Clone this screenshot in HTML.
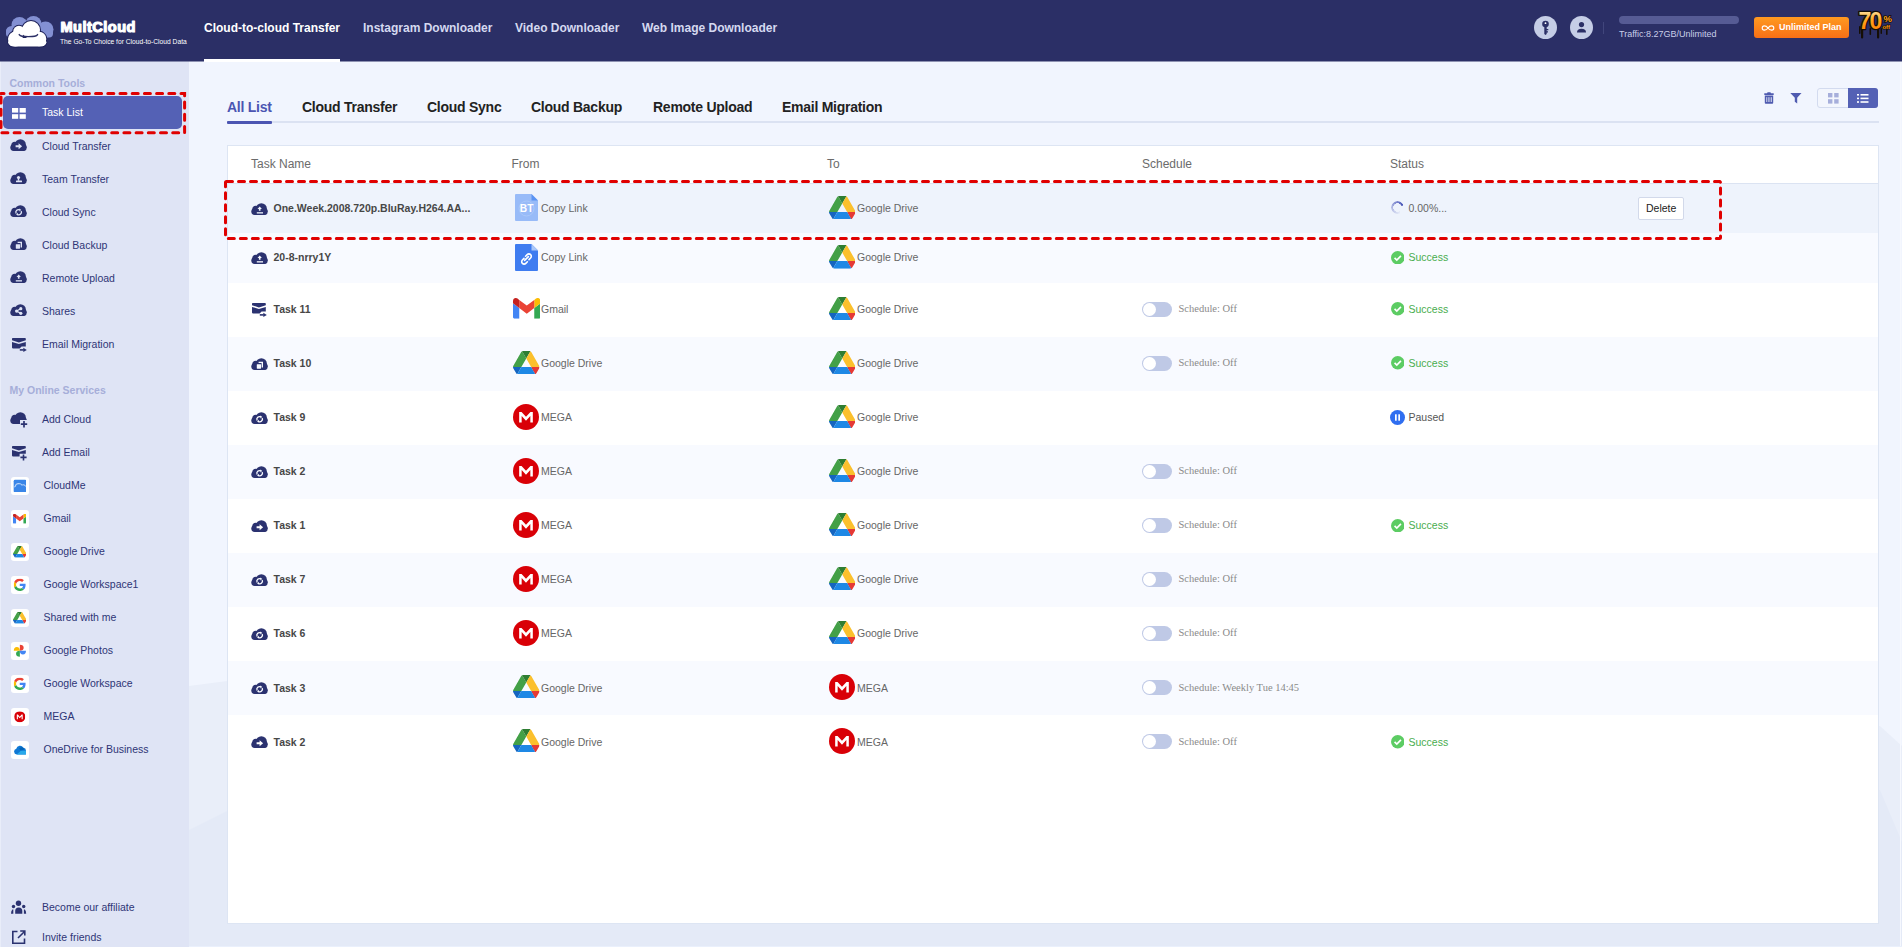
<!DOCTYPE html><html><head><meta charset="utf-8"><title>MultCloud</title><style>
*{margin:0;padding:0;box-sizing:border-box}
html,body{width:1902px;height:947px;overflow:hidden;background:#f1f5fe;font-family:"Liberation Sans",sans-serif}
.abs{position:absolute}
.t{position:absolute;white-space:nowrap;line-height:1}
#hdr{position:absolute;left:0;top:0;width:1902px;height:61px;background:#2b2f66}
#side{position:absolute;left:0;top:61px;width:189px;height:886px;background:#dfe4f5}
.si{position:absolute;left:42px;font-size:10.5px;color:#2e3575;white-space:nowrap;line-height:1}
.lbl{position:absolute;left:9.5px;font-size:10.5px;font-weight:bold;color:#a6aed9;white-space:nowrap;line-height:1}
svg{display:block}
.row{position:absolute;left:228px;width:1650px}
.tn{position:absolute;left:273.5px;font-size:10.5px;font-weight:bold;color:#474747;white-space:nowrap;line-height:1}
.tx{position:absolute;font-size:10.5px;color:#666;white-space:nowrap;line-height:1}
.sch{position:absolute;left:1178.5px;font-family:"Liberation Serif",serif;font-size:10.5px;color:#8a8a8a;white-space:nowrap;line-height:1}
.tog{position:absolute;left:1142px;width:30px;height:15px;border-radius:8px;background:#bfc9e6}
.tog:after{content:"";position:absolute;left:1px;top:1px;width:13px;height:13px;border-radius:50%;background:#fff}
</style></head><body>

<svg width="0" height="0" style="position:absolute">
<defs>
 <symbol id="cloud" viewBox="0 0 17 12">
  <circle cx="4.8" cy="6.2" r="3.5"/><circle cx="10.4" cy="5.7" r="5.5"/><circle cx="3.7" cy="8.6" r="3.4"/><circle cx="13.3" cy="8.6" r="3.5"/>
  <rect x="3.7" y="6" width="9.6" height="6"/>
 </symbol>
 <symbol id="gdrive" viewBox="0 0 87.3 78">
  <path d="m6.6 66.85 3.85 6.65c.8 1.4 1.95 2.5 3.3 3.3l13.75-23.8h-27.5c0 1.55.4 3.1 1.2 4.5z" fill="#1565c0"/>
  <path d="m43.65 25-13.75-23.8c-1.35.8-2.5 1.9-3.3 3.3l-25.4 44a9.06 9.06 0 0 0 -1.2 4.5h27.5z" fill="#43a047"/>
  <path d="m73.55 76.8c1.35-.8 2.5-1.9 3.3-3.3l1.6-2.75 7.650-13.25c.8-1.4 1.2-2.950 1.2-4.5h-27.502l5.852 11.5z" fill="#e53935"/>
  <path d="m43.65 25 13.75-23.8c-1.35-.8-2.9-1.2-4.5-1.2h-18.5c-1.6 0-3.15.45-4.5 1.2z" fill="#2e7d32"/>
  <path d="m59.8 53h-32.3l-13.75 23.8c1.35.8 2.9 1.2 4.5 1.2h50.8c1.6 0 3.15-.45 4.5-1.2z" fill="#1e88e5"/>
  <path d="m73.4 26.5-12.7-22c-.8-1.4-1.95-2.5-3.3-3.3l-13.75 23.8 16.15 28h27.45c0-1.55-.4-3.1-1.2-4.5z" fill="#fbc02d"/>
 </symbol>
 <symbol id="gmail" viewBox="52 42 88 66">
  <path fill="#4285f4" d="M58 108h14V74L52 59v43c0 3.32 2.69 6 6 6"/>
  <path fill="#34a853" d="M120 108h14c3.32 0 6-2.69 6-6V59l-20 15"/>
  <path fill="#fbbc04" d="M120 48v26l20-15v-8c0-7.42-8.47-11.650-14.4-7.2"/>
  <path fill="#ea4335" d="M72 74V48l24 18 24-18v26L96 92"/>
  <path fill="#c5221f" d="M52 51v8l20 15V48l-5.6-4.2c-5.94-4.45-14.4-.22-14.4 7.2"/>
 </symbol>
 <symbol id="gg" viewBox="0 0 48 48">
  <path fill="#EA4335" d="M24 9.5c3.54 0 6.71 1.22 9.21 3.6l6.85-6.85C35.9 2.38 30.47 0 24 0 14.62 0 6.51 5.38 2.56 13.22l7.98 6.19C12.43 13.72 17.74 9.5 24 9.5z"/>
  <path fill="#4285F4" d="M46.98 24.55c0-1.57-.15-3.09-.38-4.55H24v9.02h12.94c-.58 2.960-2.260 5.480-4.780 7.180l7.73 6c4.51-4.18 7.09-10.36 7.09-17.65z"/>
  <path fill="#FBBC05" d="M10.53 28.59c-.48-1.45-.76-2.99-.76-4.59s.27-3.14.76-4.59l-7.98-6.19C.92 16.46 0 20.12 0 24c0 3.88.92 7.54 2.56 10.78l7.97-6.19z"/>
  <path fill="#34A853" d="M24 48c6.48 0 11.93-2.13 15.89-5.81l-7.73-6c-2.15 1.45-4.92 2.3-8.16 2.3-6.26 0-11.57-4.22-13.47-9.91l-7.98 6.19C6.51 42.62 14.62 48 24 48z"/>
 </symbol>
 <symbol id="mega" viewBox="0 0 24 24">
  <circle cx="12" cy="12" r="12" fill="#d90007"/>
  <path d="M5.7 17.1V7.3h2.2l4.1 4.5 4.1-4.5h2.2v9.8h-2.3v-6l-4 4.3-4-4.3v6z" fill="#fff"/>
 </symbol>
</defs>
</svg>
<div id="hdr">
<svg class="abs" style="left:0;top:0" width="60" height="50" viewBox="0 0 60 50">
 <g fill="#8390d3"><circle cx="11.5" cy="31.5" r="5.5"/><circle cx="19.5" cy="25" r="8"/><circle cx="33.5" cy="24" r="8"/><circle cx="45.5" cy="29.5" r="8"/><rect x="6" y="28" width="47" height="9.5" rx="4"/></g>
 <g fill="#1e2259" stroke="#1e2259" stroke-width="2"><circle cx="31" cy="30" r="9"/><circle cx="19" cy="31.5" r="5.8"/><circle cx="15.5" cy="39" r="7.5"/><circle cx="39" cy="39" r="7.3"/><rect x="8.2" y="38" width="38.2" height="8.6" rx="6"/></g>
 <g fill="#fff"><circle cx="31" cy="30" r="9"/><circle cx="19" cy="31.5" r="5.8"/><circle cx="15.5" cy="39" r="7.5"/><circle cx="39" cy="39" r="7.3"/><rect x="8.2" y="38" width="38.2" height="8.6" rx="6"/></g>
 <path d="M19.2 34.6C20.3 36.6 22.5 36.6 28.4 36.6C34.3 36.6 36.5 36.6 37.6 34.6" stroke="#2b2f66" stroke-width="1.4" fill="none" stroke-linecap="round"/>
</svg>
<svg class="abs" style="left:58px;top:16px" width="84" height="20" viewBox="0 0 84 20"><text x="2.5" y="15.8" font-family="Liberation Sans" font-weight="bold" font-size="14.6" letter-spacing="0.45" fill="#fff" stroke="#fff" stroke-width="1.15" stroke-linejoin="round">MultCloud</text></svg>
<div class="t" style="left:60px;top:38.8px;font-size:6.7px;color:#fff">The Go-To Choice for Cloud-to-Cloud Data</div>
<div class="t" style="left:204px;top:22px;font-size:12px;font-weight:bold;color:#fff">Cloud-to-cloud Transfer</div>
<div class="abs" style="left:204px;top:58.5px;width:136px;height:3.5px;background:#fff"></div>
<div class="t" style="left:363px;top:22px;font-size:12px;font-weight:bold;color:#d5d9f0">Instagram Downloader</div>
<div class="t" style="left:515px;top:22px;font-size:12px;font-weight:bold;color:#d5d9f0">Video Downloader</div>
<div class="t" style="left:642px;top:22px;font-size:12px;font-weight:bold;color:#d5d9f0">Web Image Downloader</div>
<svg class="abs" style="left:1534px;top:16px" width="23" height="23" viewBox="0 0 23 23">
 <circle cx="11.5" cy="11.5" r="11.5" fill="#c5cde6"/>
 <circle cx="11.5" cy="8" r="3.3" fill="#2b2f66"/><circle cx="11.5" cy="7.2" r="0.9" fill="#fff"/>
 <path d="M10.3 10 h2.4 v3 h1.6 v1.2 h-1.6 v1.1 h1.3 v1.2 h-1.3 v1.6 l-1.2 1 l-1.2 -1z" fill="#2b2f66"/>
</svg>
<svg class="abs" style="left:1570px;top:16px" width="23" height="23" viewBox="0 0 23 23">
 <circle cx="11.5" cy="11.5" r="11.5" fill="#c5cde6"/>
 <circle cx="11.5" cy="8.6" r="2.6" fill="#2b2f66"/>
 <path d="M7 16.4 q0-3.6 4.5-3.6 q4.5 0 4.5 3.6z" fill="#2b2f66"/>
</svg>
<div class="abs" style="left:1603px;top:22px;width:1px;height:12px;background:#41467c"></div>
<div class="abs" style="left:1619px;top:16px;width:120px;height:8px;border-radius:4px;background:#565b94"></div>
<div class="t" style="left:1619px;top:30px;font-size:9px;color:#c9cee9">Traffic:8.27GB/Unlimited</div>
<div class="abs" style="left:1754px;top:16.5px;width:94.5px;height:21px;border-radius:3px;background:linear-gradient(#ff9a20,#f76f16)"></div>
<svg class="abs" style="left:1761px;top:23.5px" width="14" height="8" viewBox="0 0 14 8"><path d="M7 4 C5 1.2 1.2 1.2 1.2 4 C1.2 6.8 5 6.8 7 4 C9 1.2 12.8 1.2 12.8 4 C12.8 6.8 9 6.8 7 4z" fill="none" stroke="#fff" stroke-width="1.1"/></svg>
<div class="t" style="left:1779px;top:23px;font-size:9px;font-weight:bold;color:#fff">Unlimited Plan</div>
<svg class="abs" style="left:1856px;top:8px" width="40" height="34" viewBox="0 0 40 34">
 <defs><linearGradient id="og" x1="0" y1="0" x2="0" y2="1"><stop offset="0" stop-color="#fff2c8"/><stop offset="0.45" stop-color="#ffa51c"/><stop offset="1" stop-color="#ff7800"/></linearGradient></defs>
 <g fill="#150e05"><rect x="5" y="18" width="2.2" height="12.5" rx="1.1"/><rect x="13.5" y="20" width="1.6" height="7" rx="0.8"/><rect x="21" y="18" width="2.2" height="12.5" rx="1.1"/><rect x="24.5" y="20" width="1.5" height="6" rx="0.7"/><rect x="30" y="19" width="1.6" height="8" rx="0.8"/><rect x="3" y="18" width="1.5" height="8" rx="0.7"/></g>
 <text x="2.6" y="21.2" font-family="Liberation Sans" font-weight="bold" font-size="23" letter-spacing="-1.9" fill="url(#og)" stroke="#150e05" stroke-width="2.6" stroke-linejoin="round" paint-order="stroke">70</text>
 <text x="27.6" y="13.6" font-family="Liberation Sans" font-weight="bold" font-size="9.5" fill="#ffa51c" stroke="#150e05" stroke-width="1.6" paint-order="stroke">%</text>
 <text x="26.4" y="20.8" font-family="Liberation Sans" font-weight="bold" font-size="6" fill="#ff9a10" stroke="#150e05" stroke-width="1.2" paint-order="stroke">off</text>
</svg>
</div>
<div class="abs" style="left:0;top:61px;width:1902px;height:1px;background:rgba(43,47,102,0.5);z-index:5"></div>
<div class="abs" style="left:204px;top:61px;width:136px;height:1px;background:#fff;z-index:6"></div>
<div id="side">
<div class="abs" style="left:0;top:0;width:1px;height:886px;background:#e9edf9"></div>
<div class="lbl" style="top:16.5px">Common Tools</div>
<div class="abs" style="left:3px;top:35px;width:179px;height:33px;border-radius:5px;background:#5461b5"></div>
<svg class="abs" style="left:12px;top:46.5px" width="14" height="11" viewBox="0 0 14 11" fill="#fff"><rect x="0" y="0" width="6.2" height="4.6"/><rect x="7.6" y="0" width="6.2" height="4.6"/><rect x="0" y="6.2" width="6.2" height="4.6"/><rect x="7.6" y="6.2" width="6.2" height="4.6"/></svg>
<div class="si" style="top:46px;color:#fff">Task List</div>
<svg class="abs" style="left:10.2px;top:78.4px" width="17" height="12" viewBox="0 0 17 12"><use href="#cloud" fill="#2b3270"/><path d="M5.6 6.3h3v-2l3.5 3-3.5 3v-2h-3z" fill="#dfe4f5"/></svg>
<div class="si" style="top:80px">Cloud Transfer</div>
<svg class="abs" style="left:10.2px;top:111.4px" width="17" height="12" viewBox="0 0 17 12"><use href="#cloud" fill="#2b3270"/><circle cx="8.5" cy="5.5" r="1.6" fill="#dfe4f5"/><rect x="7.8" y="6.5" width="1.4" height="2.2" fill="#dfe4f5"/><rect x="6" y="8.6" width="6" height="1.7" rx="0.5" fill="#dfe4f5"/></svg>
<div class="si" style="top:113px">Team Transfer</div>
<svg class="abs" style="left:10.2px;top:144.4px" width="17" height="12" viewBox="0 0 17 12"><use href="#cloud" fill="#2b3270"/><path d="M6.1 8.4A2.7 2.7 0 0 1 9.8 4.9" fill="none" stroke="#dfe4f5" stroke-width="1.3"/><path d="M11.2 6A2.7 2.7 0 0 1 7.5 9.5" fill="none" stroke="#dfe4f5" stroke-width="1.3"/><path d="M9 3.6l2.2 1.2-1.6 1.8z M8.3 10.8l-2.2-1.2 1.6-1.8z" fill="#dfe4f5"/></svg>
<div class="si" style="top:146px">Cloud Sync</div>
<svg class="abs" style="left:10.2px;top:177.4px" width="17" height="12" viewBox="0 0 17 12"><use href="#cloud" fill="#2b3270"/><path d="M7.6 3.7h4.4v5.7h-1.4V5.1H7.6z" fill="#dfe4f5"/><rect x="5.8" y="6.2" width="4.2" height="4.5" rx="0.4" fill="#dfe4f5"/></svg>
<div class="si" style="top:179px">Cloud Backup</div>
<svg class="abs" style="left:10.2px;top:210.39999999999998px" width="17" height="12" viewBox="0 0 17 12"><use href="#cloud" fill="#2b3270"/><path d="M8.7 3.4l2.2 2.7h-1.4v1.7H7.9V6.1H6.5z" fill="#dfe4f5"/><rect x="5.8" y="9.2" width="6.2" height="1.3" fill="#dfe4f5"/></svg>
<div class="si" style="top:212px">Remote Upload</div>
<svg class="abs" style="left:10.2px;top:243.39999999999998px" width="17" height="12" viewBox="0 0 17 12"><use href="#cloud" fill="#2b3270"/><circle cx="6.6" cy="7.1" r="1.6" fill="#dfe4f5"/><circle cx="10.8" cy="4.7" r="1.6" fill="#dfe4f5"/><circle cx="10.8" cy="9.3" r="1.6" fill="#dfe4f5"/><path d="M6.6 7.1L10.8 4.7M6.6 7.1l4.2 2.2" stroke="#dfe4f5" stroke-width="1.2"/></svg>
<div class="si" style="top:245px">Shares</div>
<svg class="abs" style="left:12px;top:276.9px" width="16" height="15" viewBox="0 0 16 15"><path d="M0.8 0h12.2a0.8 0.8 0 0 1 0.8 0.8v1.4L6.9 4.4 0 2.2V0.8A0.8 0.8 0 0 1 0.8 0z" fill="#2b3270"/><path d="M0 3.9L6.9 6 13.8 3.9V8.5H9.6L7.6 10.4H0.8A0.8 0.8 0 0 1 0 9.6z" fill="#2b3270"/><rect x="7.8" y="11.1" width="4" height="1.6" fill="#2b3270"/><path d="M11.3 9.8L14.8 11.9 11.3 14z" fill="#2b3270"/></svg>
<div class="si" style="top:278px">Email Migration</div>
<div class="lbl" style="top:324px">My Online Services</div>
<svg class="abs" style="left:10px;top:351px" width="18" height="16" viewBox="0 0 18 16"><use href="#cloud" width="17" height="12" fill="#2b3270"/><rect x="10" y="8" width="8" height="8" fill="#dfe4f5"/><path d="M10.8 12.2h6.4M14 9v6.4" stroke="#2b3270" stroke-width="1.7"/></svg>
<div class="si" style="top:353px">Add Cloud</div>
<svg class="abs" style="left:12px;top:384.9px" width="16" height="15" viewBox="0 0 16 15"><path d="M0.8 0h12.2a0.8 0.8 0 0 1 0.8 0.8v1.4L6.9 4.4 0 2.2V0.8A0.8 0.8 0 0 1 0.8 0z" fill="#2b3270"/><path d="M0 3.9L6.9 6 13.8 3.9V7.8H7.6V10.4H0.8A0.8 0.8 0 0 1 0 9.6z" fill="#2b3270"/><path d="M8.4 11.4h6.2M11.5 8.4v6" stroke="#2b3270" stroke-width="1.6"/></svg>
<div class="si" style="top:386px">Add Email</div>
<div class="abs" style="left:10.5px;top:415.5px;width:18px;height:18px;border-radius:3px;background:#fff"><svg class="abs" style="left:2.25px;top:2.25px" width="13.5" height="13.5" viewBox="0 0 12 12"><rect x="0.6" y="0.6" width="11.4" height="11.4" rx="1.3" fill="#3a86e8"/><path d="M0.6 7.1l1.3-0.3q0.4-2.6 3.2-2.7q2 0 2.8 1.3q1.6-0.9 3 0.6l1.1 1" stroke="#b9d4f7" stroke-width="0.9" fill="none"/></svg></div>
<div class="si" style="left:43.5px;top:419px">CloudMe</div>
<div class="abs" style="left:10.5px;top:448.5px;width:18px;height:18px;border-radius:3px;background:#fff"><svg class="abs" style="left:2.25px;top:2.25px" width="13.5" height="13.5" viewBox="0 0 12 12"><svg x="0" y="1.5" width="12" height="9"><use href="#gmail"/></svg></svg></div>
<div class="si" style="left:43.5px;top:452px">Gmail</div>
<div class="abs" style="left:10.5px;top:481.5px;width:18px;height:18px;border-radius:3px;background:#fff"><svg class="abs" style="left:2.25px;top:2.25px" width="13.5" height="13.5" viewBox="0 0 12 12"><svg x="0" y="0.7" width="12" height="10.7"><use href="#gdrive"/></svg></svg></div>
<div class="si" style="left:43.5px;top:485px">Google Drive</div>
<div class="abs" style="left:10.5px;top:514.5px;width:18px;height:18px;border-radius:3px;background:#fff"><svg class="abs" style="left:2.25px;top:2.25px" width="13.5" height="13.5" viewBox="0 0 12 12"><svg x="0.5" y="0.5" width="11" height="11"><use href="#gg"/></svg></svg></div>
<div class="si" style="left:43.5px;top:518px">Google Workspace1</div>
<div class="abs" style="left:10.5px;top:547.5px;width:18px;height:18px;border-radius:3px;background:#fff"><svg class="abs" style="left:2.25px;top:2.25px" width="13.5" height="13.5" viewBox="0 0 12 12"><svg x="0" y="0.7" width="12" height="10.7"><use href="#gdrive"/></svg></svg></div>
<div class="si" style="left:43.5px;top:551px">Shared with me</div>
<div class="abs" style="left:10.5px;top:580.5px;width:18px;height:18px;border-radius:3px;background:#fff"><svg class="abs" style="left:2.25px;top:2.25px" width="13.5" height="13.5" viewBox="0 0 12 12"><path d="M6.1 6V0.6A3.4 2.7 0 0 1 6.1 6z" fill="#ea4335"/><path d="M6.1 6H0.7A2.7 3.4 0 0 1 6.1 6z" fill="#fbbc04"/><path d="M6.1 6v5.4A3.4 2.7 0 0 1 6.1 6z" fill="#34a853"/><path d="M6.1 6h5.4A2.7 3.4 0 0 1 6.1 6z" fill="#4285f4"/></svg></div>
<div class="si" style="left:43.5px;top:584px">Google Photos</div>
<div class="abs" style="left:10.5px;top:613.5px;width:18px;height:18px;border-radius:3px;background:#fff"><svg class="abs" style="left:2.25px;top:2.25px" width="13.5" height="13.5" viewBox="0 0 12 12"><svg x="0.5" y="0.5" width="11" height="11"><use href="#gg"/></svg></svg></div>
<div class="si" style="left:43.5px;top:617px">Google Workspace</div>
<div class="abs" style="left:10.5px;top:646.5px;width:18px;height:18px;border-radius:3px;background:#fff"><svg class="abs" style="left:2.25px;top:2.25px" width="13.5" height="13.5" viewBox="0 0 12 12"><svg x="1" y="1" width="10" height="10"><use href="#mega"/></svg></svg></div>
<div class="si" style="left:43.5px;top:650px">MEGA</div>
<div class="abs" style="left:10.5px;top:679.5px;width:18px;height:18px;border-radius:3px;background:#fff"><svg class="abs" style="left:2.25px;top:2.25px" width="13.5" height="13.5" viewBox="0 0 12 12"><path d="M3.3 10.2a2.6 2.6 0 0 1-.4-5.1 3.4 3.4 0 0 1 6.3-.9 2.6 2.6 0 0 1 2.3 2.7 1.9 1.9 0 0 1-.5 3.3z" fill="#0f78d4"/><path d="M5.4 4.9a3.4 3.4 0 0 1 3.8-.7 2.6 2.6 0 0 1 .8 1.6L7 6.9z" fill="#0364b8"/><path d="M3.3 10.2h7.8a1.9 1.9 0 0 0 .5-3.3L7 6.9 4.2 9.3z" fill="#28a8ea"/></svg></div>
<div class="si" style="left:43.5px;top:683px">OneDrive for Business</div>
<svg class="abs" style="left:10px;top:838px" width="18" height="16" viewBox="0 0 18 16" fill="#2b3270"><circle cx="8.5" cy="4.2" r="2.7"/><path d="M5.2 14.7V12.1a3.55 3.55 0 0 1 7.1 0V14.7z"/><circle cx="3.5" cy="7.5" r="1.7"/><circle cx="13.7" cy="7.5" r="1.7"/><path d="M1 14.7q0-3 1.4-4.3h0.9v4.3z"/><path d="M16.2 14.7q0-3-1.4-4.3h-0.9v4.3z"/></svg>
<div class="si" style="top:841px">Become our affiliate</div>
<svg class="abs" style="left:12px;top:869px" width="14" height="14" viewBox="0 0 14 14" fill="none" stroke="#2b3270" stroke-width="1.6"><path d="M5.5 1.5H0.8v11.7h11.7V8.5"/><path d="M6 8L12.8 1.2M8.2 1h4.6v4.6"/></svg>
<div class="si" style="top:871px">Invite friends</div>
<svg class="abs" style="left:0;top:30px" width="188" height="45" viewBox="0 0 188 45"><rect x="1" y="2.4" width="183.6" height="39.3" fill="none" stroke="#e00000" stroke-width="3" stroke-dasharray="6 6.2" stroke-dashoffset="3" stroke-linecap="round"/></svg>
</div>
<svg class="abs" style="left:189px;top:61px" width="1713" height="886" viewBox="0 0 1713 886">
 <polygon points="0,625 38,620 1691,665 1713,685 1713,886 0,886" fill="#e9eef9"/>
 <polygon points="0,769 38,750 1691,729 1713,781 1713,886 0,886" fill="#e4eaf7"/>
</svg>
<div class="abs" style="left:1900px;top:61px;width:1px;height:886px;background:#f6f8fe"></div>
<div class="abs" style="left:189px;top:946px;width:1713px;height:1px;background:#eaf0fc"></div>
<div class="t" style="left:227px;top:100.4px;font-size:14px;letter-spacing:-0.26px;font-weight:bold;color:#4b55b2">All List</div>
<div class="t" style="left:302px;top:100.4px;font-size:14px;letter-spacing:-0.26px;font-weight:bold;color:#222">Cloud Transfer</div>
<div class="t" style="left:427px;top:100.4px;font-size:14px;letter-spacing:-0.26px;font-weight:bold;color:#222">Cloud Sync</div>
<div class="t" style="left:531px;top:100.4px;font-size:14px;letter-spacing:-0.26px;font-weight:bold;color:#222">Cloud Backup</div>
<div class="t" style="left:653px;top:100.4px;font-size:14px;letter-spacing:-0.26px;font-weight:bold;color:#222">Remote Upload</div>
<div class="t" style="left:782px;top:100.4px;font-size:14px;letter-spacing:-0.26px;font-weight:bold;color:#222">Email Migration</div>
<div class="abs" style="left:227px;top:121px;width:1652px;height:2px;background:#dbe2f2"></div>
<div class="abs" style="left:227px;top:120.5px;width:45px;height:3px;border-radius:1px;background:#4b55b2"></div>
<svg class="abs" style="left:1764px;top:92px" width="10" height="12" viewBox="0 0 10 12" fill="#4f5bb0"><path d="M3.6 0.2h2.8l0.6 1h2.7v1.7H0.3V1.2H3z"/><path d="M0.8 3.6h8.4v7.2q0 0.9-0.9 0.9H1.7q-0.9 0-0.9-0.9z"/><path d="M2.6 5.2v4.8M4.3 5.2v4.8M5.9 5.2v4.8M7.5 5.2v4.8" stroke="#c6cde8" stroke-width="0.9"/></svg>
<svg class="abs" style="left:1790px;top:92px" width="12" height="12" viewBox="0 0 12 12" fill="#4f5bb0"><path d="M0.3 0.9h11.2l-4.3 4.8v5.9l-2.4-1.8V5.7z"/></svg>
<div class="abs" style="left:1817px;top:88px;width:61px;height:20px;border-radius:3px;border:1px solid #d3dbef;background:#f3f6fd"></div>
<div class="abs" style="left:1848px;top:88px;width:30px;height:20px;border-radius:0 3px 3px 0;background:#5461b5"></div>
<svg class="abs" style="left:1827.5px;top:93px" width="11" height="11" viewBox="0 0 11 11" fill="#a6aedb"><rect x="0" y="0" width="4.4" height="4.4"/><rect x="6.2" y="0" width="4.4" height="4.4"/><rect x="0" y="6.2" width="4.4" height="4.4"/><rect x="6.2" y="6.2" width="4.4" height="4.4"/></svg>
<svg class="abs" style="left:1857px;top:94px" width="12" height="9" viewBox="0 0 12 9" fill="#fff"><rect x="0" y="0" width="2" height="1.6"/><rect x="3.5" y="0" width="8" height="1.6"/><rect x="0" y="3.6" width="2" height="1.6"/><rect x="3.5" y="3.6" width="8" height="1.6"/><rect x="0" y="7.2" width="2" height="1.6"/><rect x="3.5" y="7.2" width="8" height="1.6"/></svg>
<div class="abs" style="left:227px;top:145px;width:1652px;height:779px;background:#fff;border:1px solid #dde5f3"></div>
<div class="t" style="left:251px;top:157.5px;font-size:12px;color:#6b6b6b">Task Name</div>
<div class="t" style="left:511.5px;top:157.5px;font-size:12px;color:#6b6b6b">From</div>
<div class="t" style="left:827px;top:157.5px;font-size:12px;color:#6b6b6b">To</div>
<div class="t" style="left:1142px;top:157.5px;font-size:12px;color:#6b6b6b">Schedule</div>
<div class="t" style="left:1390px;top:157.5px;font-size:12px;color:#6b6b6b">Status</div>
<div class="abs" style="left:228px;top:182.5px;width:1650px;height:1.5px;background:#dbe3f2"></div>
<div class="row" style="top:184px;height:49px;background:#eef3fc"></div>
<svg class="abs" style="left:250.5px;top:202.5px" width="17" height="12" viewBox="0 0 17 12"><use href="#cloud" fill="#2b3270"/><path d="M8.7 3.4l2.2 2.7h-1.4v1.7H7.9V6.1H6.5z" fill="#eef3fc"/><rect x="5.8" y="9.2" width="6.2" height="1.3" fill="#eef3fc"/></svg>
<div class="tn" style="top:202.5px">One.Week.2008.720p.BluRay.H264.AA...</div>
<svg class="abs" style="left:514.5px;top:194.0px" width="23" height="27" viewBox="0 0 23 27"><path d="M1 0h15.5l6.5 6.5v19.5q0 1-1 1H1Q0 27 0 26V1Q0 0 1 0z" fill="#98bbf8"/><circle cx="11.5" cy="14.5" r="7.5" fill="none" stroke="#aac8fa" stroke-width="1"/><path d="M16.5 0l6.5 6.5h-6.5z" fill="#5a93f2"/><text x="11.6" y="18" text-anchor="middle" font-family="Liberation Sans" font-weight="bold" font-size="10.2" fill="#fff">BT</text></svg>
<div class="tx" style="left:541px;top:202.5px">Copy Link</div>
<svg class="abs" style="left:828.7px;top:195.6px" width="26.5" height="23.7" viewBox="0 0 87.3 78" preserveAspectRatio="none"><use href="#gdrive"/></svg>
<div class="tx" style="left:857px;top:202.5px">Google Drive</div>
<div class="abs" style="left:1390.5px;top:200.75px;width:13.5px;height:13.5px;border-radius:50%;background:conic-gradient(from 150deg, rgba(74,87,185,0.04) 0deg, rgba(74,87,185,0.45) 140deg, #4a57b9 270deg, transparent 270deg);-webkit-mask:radial-gradient(circle, transparent 4.1px, #000 4.4px)"></div><div class="abs" style="left:1400.72px;top:203.53px;width:2.5px;height:2.5px;border-radius:50%;background:#4a57b9"></div>
<div class="tx" style="left:1408.5px;top:202.5px">0.00%...</div>
<div class="abs" style="left:1637.5px;top:197px;width:46px;height:23px;border:1px solid #d2d9ea;border-radius:2px;background:#fff"></div>
<div class="t" style="left:1646px;top:202.5px;font-size:10.5px;color:#222">Delete</div>
<div class="row" style="top:233px;height:50px;background:#f8faff"></div>
<svg class="abs" style="left:250.5px;top:252.0px" width="17" height="12" viewBox="0 0 17 12"><use href="#cloud" fill="#2b3270"/><path d="M8.7 3.4l2.2 2.7h-1.4v1.7H7.9V6.1H6.5z" fill="#f8faff"/><rect x="5.8" y="9.2" width="6.2" height="1.3" fill="#f8faff"/></svg>
<div class="tn" style="top:252.0px">20-8-nrry1Y</div>
<svg class="abs" style="left:514.5px;top:243.5px" width="23" height="27" viewBox="0 0 23 27"><path d="M1 0h15.5l6.5 6.5v19.5q0 1-1 1H1Q0 27 0 26V1Q0 0 1 0z" fill="#3f7cf0"/><path d="M16.5 0l6.5 6.5h-6.5z" fill="#a9c6f8"/><g fill="none" stroke="#fff" stroke-width="1.6" stroke-linecap="round"><path d="M10.6 12.2l1.6-1.6a2.4 2.4 0 0 1 3.4 3.4l-1.6 1.6"/><path d="M12.4 17.8l-1.6 1.6a2.4 2.4 0 0 1-3.4-3.4l1.6-1.6"/><path d="M9.6 16.4l3.8-3.8"/></g></svg>
<div class="tx" style="left:541px;top:252.0px">Copy Link</div>
<svg class="abs" style="left:828.7px;top:245.1px" width="26.5" height="23.7" viewBox="0 0 87.3 78" preserveAspectRatio="none"><use href="#gdrive"/></svg>
<div class="tx" style="left:857px;top:252.0px">Google Drive</div>
<svg class="abs" style="left:1390.8px;top:250.5px" width="13.5" height="13.5" viewBox="0 0 14 14"><circle cx="7" cy="7" r="7" fill="#5ccc63"/><path d="M3.7 7.2l2.3 2.3 4.3-4.4" stroke="#fff" stroke-width="1.7" fill="none"/></svg>
<div class="tx" style="left:1408.5px;top:252.0px;color:#48ad4e">Success</div>
<div class="row" style="top:283px;height:54px;background:#ffffff"></div>
<svg class="abs" style="left:252px;top:303.2px" width="16" height="15" viewBox="0 0 16 15"><path d="M0.8 0h12.2a0.8 0.8 0 0 1 0.8 0.8v1.4L6.9 4.4 0 2.2V0.8A0.8 0.8 0 0 1 0.8 0z" fill="#2b3270"/><path d="M0 3.9L6.9 6 13.8 3.9V8.5H9.6L7.6 10.4H0.8A0.8 0.8 0 0 1 0 9.6z" fill="#2b3270"/><rect x="7.8" y="11.1" width="4" height="1.6" fill="#2b3270"/><path d="M11.3 9.8L14.8 11.9 11.3 14z" fill="#2b3270"/></svg>
<div class="tn" style="top:303.5px">Task 11</div>
<svg class="abs" style="left:512.7px;top:298.1px" width="27.5" height="20.8" viewBox="0 0 88 66" preserveAspectRatio="none"><use href="#gmail"/></svg>
<div class="tx" style="left:541px;top:303.5px">Gmail</div>
<svg class="abs" style="left:828.7px;top:296.6px" width="26.5" height="23.7" viewBox="0 0 87.3 78" preserveAspectRatio="none"><use href="#gdrive"/></svg>
<div class="tx" style="left:857px;top:303.5px">Google Drive</div>
<div class="tog" style="top:301.5px"></div>
<div class="sch" style="top:303.5px">Schedule: Off</div>
<svg class="abs" style="left:1390.8px;top:302.0px" width="13.5" height="13.5" viewBox="0 0 14 14"><circle cx="7" cy="7" r="7" fill="#5ccc63"/><path d="M3.7 7.2l2.3 2.3 4.3-4.4" stroke="#fff" stroke-width="1.7" fill="none"/></svg>
<div class="tx" style="left:1408.5px;top:303.5px;color:#48ad4e">Success</div>
<div class="row" style="top:337px;height:54px;background:#f8faff"></div>
<svg class="abs" style="left:250.5px;top:357.5px" width="17" height="12" viewBox="0 0 17 12"><use href="#cloud" fill="#2b3270"/><path d="M7.6 3.7h4.4v5.7h-1.4V5.1H7.6z" fill="#f8faff"/><rect x="5.8" y="6.2" width="4.2" height="4.5" rx="0.4" fill="#f8faff"/></svg>
<div class="tn" style="top:357.65px">Task 10</div>
<svg class="abs" style="left:513.2px;top:350.6px" width="26.5" height="23.7" viewBox="0 0 87.3 78" preserveAspectRatio="none"><use href="#gdrive"/></svg>
<div class="tx" style="left:541px;top:357.65px">Google Drive</div>
<svg class="abs" style="left:828.7px;top:350.6px" width="26.5" height="23.7" viewBox="0 0 87.3 78" preserveAspectRatio="none"><use href="#gdrive"/></svg>
<div class="tx" style="left:857px;top:357.65px">Google Drive</div>
<div class="tog" style="top:355.5px"></div>
<div class="sch" style="top:357.65px">Schedule: Off</div>
<svg class="abs" style="left:1390.8px;top:356.15px" width="13.5" height="13.5" viewBox="0 0 14 14"><circle cx="7" cy="7" r="7" fill="#5ccc63"/><path d="M3.7 7.2l2.3 2.3 4.3-4.4" stroke="#fff" stroke-width="1.7" fill="none"/></svg>
<div class="tx" style="left:1408.5px;top:357.65px;color:#48ad4e">Success</div>
<div class="row" style="top:391px;height:54px;background:#ffffff"></div>
<svg class="abs" style="left:250.5px;top:411.5px" width="17" height="12" viewBox="0 0 17 12"><use href="#cloud" fill="#2b3270"/><path d="M6.1 8.4A2.7 2.7 0 0 1 9.8 4.9" fill="none" stroke="#ffffff" stroke-width="1.3"/><path d="M11.2 6A2.7 2.7 0 0 1 7.5 9.5" fill="none" stroke="#ffffff" stroke-width="1.3"/><path d="M9 3.6l2.2 1.2-1.6 1.8z M8.3 10.8l-2.2-1.2 1.6-1.8z" fill="#ffffff"/></svg>
<div class="tn" style="top:411.8px">Task 9</div>
<svg class="abs" style="left:513.2px;top:403.5px" width="26" height="26"><use href="#mega"/></svg>
<div class="tx" style="left:541px;top:411.8px">MEGA</div>
<svg class="abs" style="left:828.7px;top:404.6px" width="26.5" height="23.7" viewBox="0 0 87.3 78" preserveAspectRatio="none"><use href="#gdrive"/></svg>
<div class="tx" style="left:857px;top:411.8px">Google Drive</div>
<svg class="abs" style="left:1390px;top:409.8px" width="15" height="15" viewBox="0 0 15 15"><circle cx="7.5" cy="7.5" r="7.5" fill="#2f6ef0"/><rect x="5" y="4.3" width="1.7" height="6.4" fill="#fff"/><rect x="8.3" y="4.3" width="1.7" height="6.4" fill="#fff"/></svg>
<div class="tx" style="left:1408.5px;top:411.8px;color:#555">Paused</div>
<div class="row" style="top:445px;height:54px;background:#f8faff"></div>
<svg class="abs" style="left:250.5px;top:465.5px" width="17" height="12" viewBox="0 0 17 12"><use href="#cloud" fill="#2b3270"/><path d="M6.1 8.4A2.7 2.7 0 0 1 9.8 4.9" fill="none" stroke="#f8faff" stroke-width="1.3"/><path d="M11.2 6A2.7 2.7 0 0 1 7.5 9.5" fill="none" stroke="#f8faff" stroke-width="1.3"/><path d="M9 3.6l2.2 1.2-1.6 1.8z M8.3 10.8l-2.2-1.2 1.6-1.8z" fill="#f8faff"/></svg>
<div class="tn" style="top:465.95px">Task 2</div>
<svg class="abs" style="left:513.2px;top:457.5px" width="26" height="26"><use href="#mega"/></svg>
<div class="tx" style="left:541px;top:465.95px">MEGA</div>
<svg class="abs" style="left:828.7px;top:458.6px" width="26.5" height="23.7" viewBox="0 0 87.3 78" preserveAspectRatio="none"><use href="#gdrive"/></svg>
<div class="tx" style="left:857px;top:465.95px">Google Drive</div>
<div class="tog" style="top:463.5px"></div>
<div class="sch" style="top:465.95px">Schedule: Off</div>
<div class="row" style="top:499px;height:54px;background:#ffffff"></div>
<svg class="abs" style="left:250.5px;top:519.5px" width="17" height="12" viewBox="0 0 17 12"><use href="#cloud" fill="#2b3270"/><path d="M5.6 6.3h3v-2l3.5 3-3.5 3v-2h-3z" fill="#ffffff"/></svg>
<div class="tn" style="top:520.1px">Task 1</div>
<svg class="abs" style="left:513.2px;top:511.5px" width="26" height="26"><use href="#mega"/></svg>
<div class="tx" style="left:541px;top:520.1px">MEGA</div>
<svg class="abs" style="left:828.7px;top:512.6px" width="26.5" height="23.7" viewBox="0 0 87.3 78" preserveAspectRatio="none"><use href="#gdrive"/></svg>
<div class="tx" style="left:857px;top:520.1px">Google Drive</div>
<div class="tog" style="top:517.5px"></div>
<div class="sch" style="top:520.1px">Schedule: Off</div>
<svg class="abs" style="left:1390.8px;top:518.6px" width="13.5" height="13.5" viewBox="0 0 14 14"><circle cx="7" cy="7" r="7" fill="#5ccc63"/><path d="M3.7 7.2l2.3 2.3 4.3-4.4" stroke="#fff" stroke-width="1.7" fill="none"/></svg>
<div class="tx" style="left:1408.5px;top:520.1px;color:#48ad4e">Success</div>
<div class="row" style="top:553px;height:54px;background:#f8faff"></div>
<svg class="abs" style="left:250.5px;top:573.5px" width="17" height="12" viewBox="0 0 17 12"><use href="#cloud" fill="#2b3270"/><path d="M6.1 8.4A2.7 2.7 0 0 1 9.8 4.9" fill="none" stroke="#f8faff" stroke-width="1.3"/><path d="M11.2 6A2.7 2.7 0 0 1 7.5 9.5" fill="none" stroke="#f8faff" stroke-width="1.3"/><path d="M9 3.6l2.2 1.2-1.6 1.8z M8.3 10.8l-2.2-1.2 1.6-1.8z" fill="#f8faff"/></svg>
<div class="tn" style="top:574.25px">Task 7</div>
<svg class="abs" style="left:513.2px;top:565.5px" width="26" height="26"><use href="#mega"/></svg>
<div class="tx" style="left:541px;top:574.25px">MEGA</div>
<svg class="abs" style="left:828.7px;top:566.6px" width="26.5" height="23.7" viewBox="0 0 87.3 78" preserveAspectRatio="none"><use href="#gdrive"/></svg>
<div class="tx" style="left:857px;top:574.25px">Google Drive</div>
<div class="tog" style="top:571.5px"></div>
<div class="sch" style="top:574.25px">Schedule: Off</div>
<div class="row" style="top:607px;height:54px;background:#ffffff"></div>
<svg class="abs" style="left:250.5px;top:627.5px" width="17" height="12" viewBox="0 0 17 12"><use href="#cloud" fill="#2b3270"/><path d="M6.1 8.4A2.7 2.7 0 0 1 9.8 4.9" fill="none" stroke="#ffffff" stroke-width="1.3"/><path d="M11.2 6A2.7 2.7 0 0 1 7.5 9.5" fill="none" stroke="#ffffff" stroke-width="1.3"/><path d="M9 3.6l2.2 1.2-1.6 1.8z M8.3 10.8l-2.2-1.2 1.6-1.8z" fill="#ffffff"/></svg>
<div class="tn" style="top:628.4px">Task 6</div>
<svg class="abs" style="left:513.2px;top:619.5px" width="26" height="26"><use href="#mega"/></svg>
<div class="tx" style="left:541px;top:628.4px">MEGA</div>
<svg class="abs" style="left:828.7px;top:620.6px" width="26.5" height="23.7" viewBox="0 0 87.3 78" preserveAspectRatio="none"><use href="#gdrive"/></svg>
<div class="tx" style="left:857px;top:628.4px">Google Drive</div>
<div class="tog" style="top:625.5px"></div>
<div class="sch" style="top:628.4px">Schedule: Off</div>
<div class="row" style="top:661px;height:54px;background:#f8faff"></div>
<svg class="abs" style="left:250.5px;top:681.5px" width="17" height="12" viewBox="0 0 17 12"><use href="#cloud" fill="#2b3270"/><path d="M6.1 8.4A2.7 2.7 0 0 1 9.8 4.9" fill="none" stroke="#f8faff" stroke-width="1.3"/><path d="M11.2 6A2.7 2.7 0 0 1 7.5 9.5" fill="none" stroke="#f8faff" stroke-width="1.3"/><path d="M9 3.6l2.2 1.2-1.6 1.8z M8.3 10.8l-2.2-1.2 1.6-1.8z" fill="#f8faff"/></svg>
<div class="tn" style="top:682.55px">Task 3</div>
<svg class="abs" style="left:513.2px;top:674.6px" width="26.5" height="23.7" viewBox="0 0 87.3 78" preserveAspectRatio="none"><use href="#gdrive"/></svg>
<div class="tx" style="left:541px;top:682.55px">Google Drive</div>
<svg class="abs" style="left:828.7px;top:673.5px" width="26" height="26"><use href="#mega"/></svg>
<div class="tx" style="left:857px;top:682.55px">MEGA</div>
<div class="tog" style="top:679.5px"></div>
<div class="sch" style="top:682.55px">Schedule: Weekly Tue 14:45</div>
<div class="row" style="top:715px;height:54px;background:#ffffff"></div>
<svg class="abs" style="left:250.5px;top:735.5px" width="17" height="12" viewBox="0 0 17 12"><use href="#cloud" fill="#2b3270"/><path d="M5.6 6.3h3v-2l3.5 3-3.5 3v-2h-3z" fill="#ffffff"/></svg>
<div class="tn" style="top:736.7px">Task 2</div>
<svg class="abs" style="left:513.2px;top:728.6px" width="26.5" height="23.7" viewBox="0 0 87.3 78" preserveAspectRatio="none"><use href="#gdrive"/></svg>
<div class="tx" style="left:541px;top:736.7px">Google Drive</div>
<svg class="abs" style="left:828.7px;top:727.5px" width="26" height="26"><use href="#mega"/></svg>
<div class="tx" style="left:857px;top:736.7px">MEGA</div>
<div class="tog" style="top:733.5px"></div>
<div class="sch" style="top:736.7px">Schedule: Off</div>
<svg class="abs" style="left:1390.8px;top:735.2px" width="13.5" height="13.5" viewBox="0 0 14 14"><circle cx="7" cy="7" r="7" fill="#5ccc63"/><path d="M3.7 7.2l2.3 2.3 4.3-4.4" stroke="#fff" stroke-width="1.7" fill="none"/></svg>
<div class="tx" style="left:1408.5px;top:736.7px;color:#48ad4e">Success</div>
<svg class="abs" style="left:222px;top:178px" width="1502" height="64" viewBox="0 0 1502 64"><rect x="3.5" y="3.5" width="1495" height="57" rx="1" fill="none" stroke="#e00000" stroke-width="3" stroke-dasharray="6 6" stroke-linecap="round"/></svg>
</body></html>
